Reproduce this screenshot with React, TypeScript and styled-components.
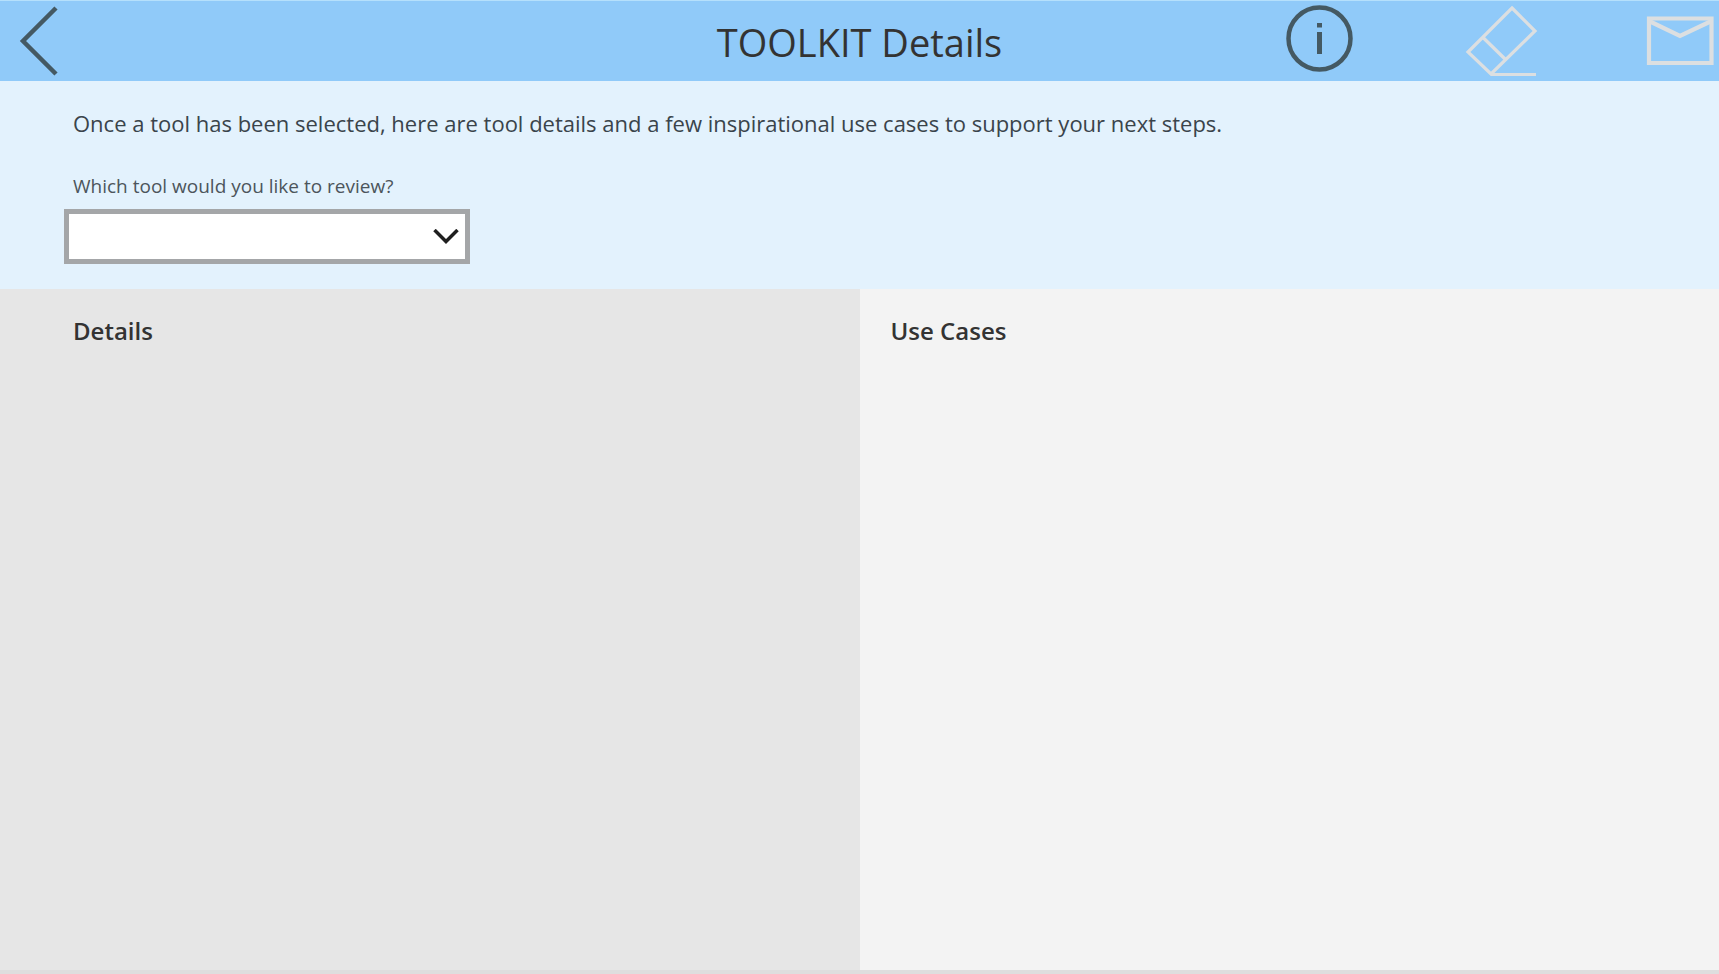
import React from "react";
import styled, { createGlobalStyle } from "styled-components";

const GlobalStyle = createGlobalStyle`
  *, *::before, *::after { box-sizing: border-box; }
  body {
    margin: 0;
    background: #dedede;
    color: #333;
    font-family: "Segoe UI", "Open Sans", "Noto Sans", sans-serif;
  }
`;

const Screen = styled.div`
  display: flex;
  flex-direction: column;
  min-height: 100vh;
  border-bottom: 4px solid #dedede;
`;

const Header = styled.header`
  display: grid;
  grid-template-columns: 1fr auto 1fr;
  align-items: center;
  height: 81px;
  background: #90caf9;
  border-top: 1px solid #b5e0fc;
`;

const Title = styled.h1`
  margin: 0;
  padding-top: 2px;
  font-size: 38px;
  line-height: 52px;
  font-weight: 400;
`;

const Actions = styled.nav`
  display: flex;
  justify-content: flex-end;
  gap: 102px;
`;

const IconButton = styled.button<{ $tone: string }>`
  display: block;
  width: 78px;
  height: 80px;
  padding: 0;
  border: 0;
  background: none;
  color: ${({ $tone }) => $tone};
  cursor: pointer;

  svg {
    display: block;
    fill: none;
    stroke: currentColor;
  }
`;

const Intro = styled.section`
  display: flex;
  flex-direction: column;
  align-items: flex-start;
  height: 208px;
  padding: 26px 64px 0;
  background: #e3f2fd;
`;

const Lead = styled.p`
  margin: 0 0 33px;
  padding-left: 9px;
  font-size: 22px;
  line-height: 32px;
  color: #3a444b;
`;

const FieldLabel = styled.label`
  padding-left: 9px;
  font-size: 19px;
  line-height: 28px;
  margin-bottom: 9px;
  color: #4c555b;
`;

const SelectFrame = styled.div`
  display: grid;
  width: 406px;
  max-width: 100%;

  > * { grid-area: 1 / 1; }

  svg {
    place-self: center end;
    margin-right: 11px;
    fill: none;
    stroke: #1f1f1f;
    pointer-events: none;
  }
`;

const ToolSelect = styled.select`
  appearance: none;
  width: 100%;
  height: 55px;
  padding: 0 48px 0 12px;
  border: 5px solid #a4a6a8;
  border-radius: 0;
  background: #fff;
  font: inherit;
  font-size: 19px;
`;

const Columns = styled.main`
  display: grid;
  grid-template-columns: 1fr 1fr;
  flex: 1;
`;

const Panel = styled.section<{ $bg: string; $inset: number }>`
  padding: 26px 32px 0 ${({ $inset }) => $inset}px;
  background: ${({ $bg }) => $bg};
`;

const PanelTitle = styled.h2`
  margin: 0;
  font-size: 24px;
  line-height: 32px;
  font-weight: 600;
`;

const DARK = "#445963";
const MUTED = "#dcdfe1";

export default function App() {
  return (
    <>
      <GlobalStyle />
      <Screen>
        <Header>
          <IconButton $tone={DARK} aria-label="Back">
            <svg width="78" height="80" viewBox="0 0 78 80" strokeWidth="4.500">
              <path d="M56 7 23 40 56 73" />
            </svg>
          </IconButton>
          <Title>TOOLKIT Details</Title>
          <Actions>
            <IconButton $tone={DARK} aria-label="Information">
              <svg width="78" height="80" viewBox="0 0 78 80">
                <circle cx="38.500" cy="37.500" r="31" strokeWidth="4.500" />
                <path d="M38.500 22v4.500M38.500 31v22" strokeWidth="5" />
              </svg>
            </IconButton>
            <IconButton $tone={MUTED} aria-label="Clear">
              <svg width="78" height="80" viewBox="0 0 78 80" strokeWidth="3.200">
                <path d="M51 7 74 30 30 73 7 51ZM22 36.500 44 58" />
                <path d="M30 73.500H75" />
              </svg>
            </IconButton>
            <IconButton $tone={MUTED} aria-label="Mail">
              <svg width="78" height="80" viewBox="0 0 78 80" strokeWidth="4.200">
                <path d="M8 17.500H70.500V62H8Z" />
                <path d="M8 20 39 35 70.500 20" />
              </svg>
            </IconButton>
          </Actions>
        </Header>
        <Intro>
          <Lead>
            Once a tool has been selected, here are tool details and a few
            inspirational use cases to support your next steps.
          </Lead>
          <FieldLabel htmlFor="tool">Which tool would you like to review?</FieldLabel>
          <SelectFrame>
            <ToolSelect id="tool" defaultValue="">
              <option value=""></option>
            </ToolSelect>
            <svg width="26" height="16" viewBox="0 0 26 16" strokeWidth="3.500">
              <path d="M1.500 1 13 12.500 24.500 1" />
            </svg>
          </SelectFrame>
        </Intro>
        <Columns>
          <Panel $bg="#e6e6e6" $inset={73}>
            <PanelTitle>Details</PanelTitle>
          </Panel>
          <Panel $bg="#f3f3f3" $inset={31}>
            <PanelTitle>Use Cases</PanelTitle>
          </Panel>
        </Columns>
      </Screen>
    </>
  );
}
